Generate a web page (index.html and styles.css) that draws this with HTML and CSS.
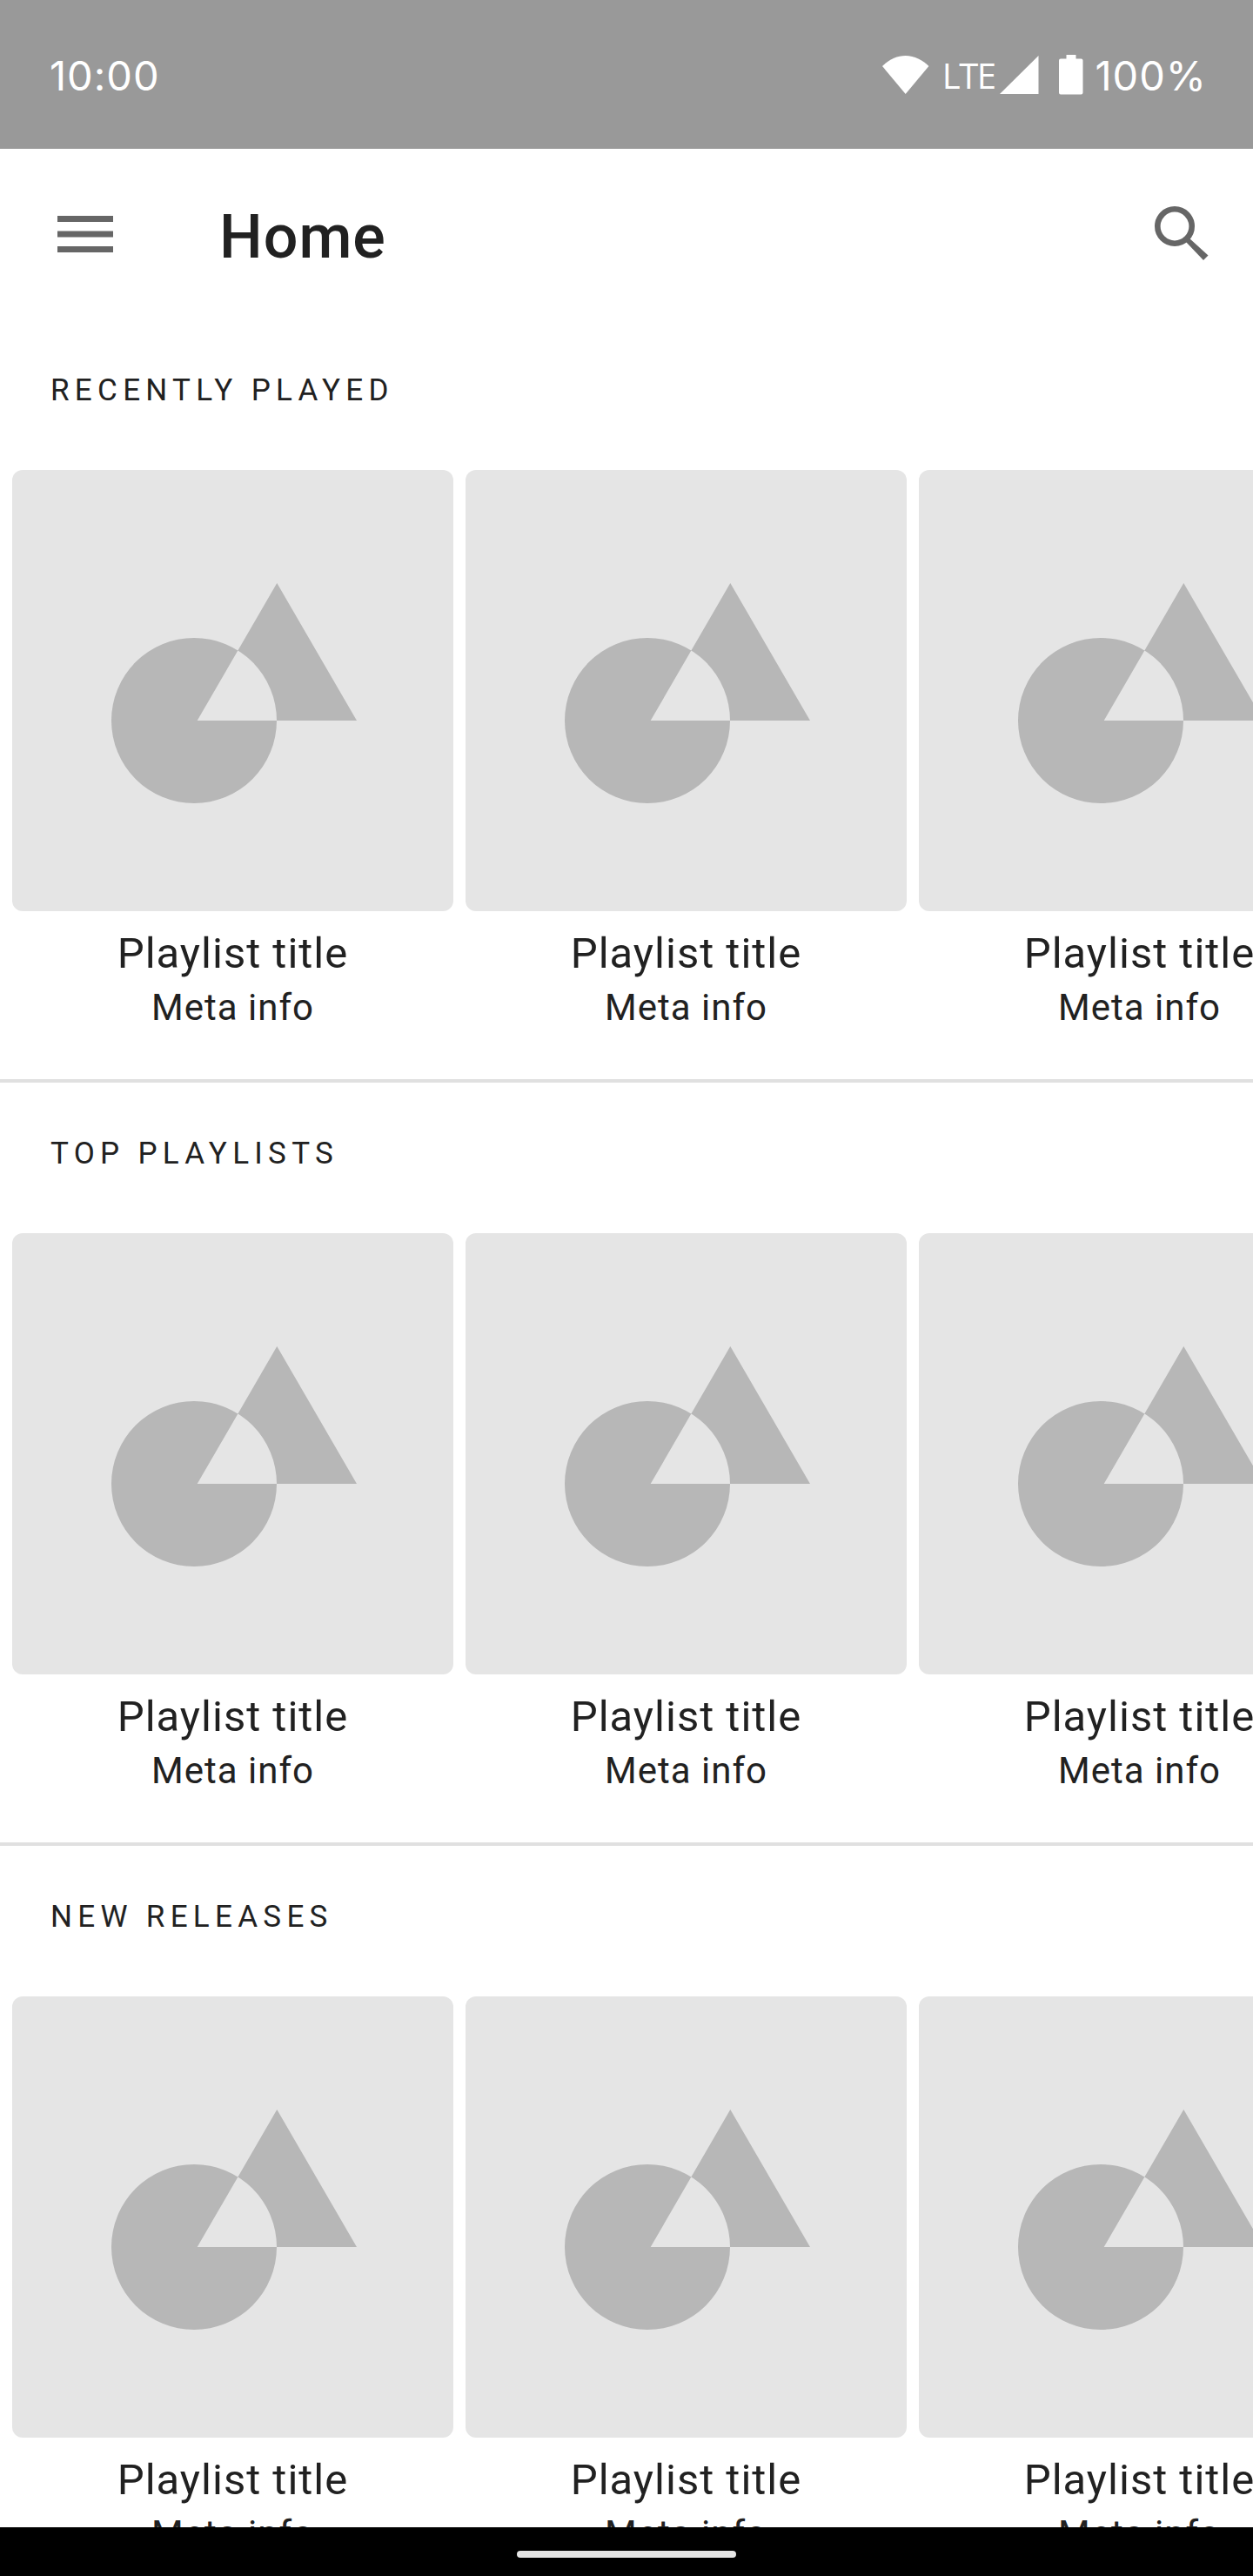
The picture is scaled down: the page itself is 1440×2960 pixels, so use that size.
FILE: index.html
```html
<!doctype html>
<html>
<head>
<title>Home</title>
<meta http-equiv="Content-Type" content="text/html; charset=utf-8" />
<link rel="stylesheet" href="styles.css">
</head>

<body>

<svg class="defs" width="0" height="0">
	<symbol id="art" viewBox="0 0 507 507">
		<!-- Circle and triangle in one path: the overlap drops out with evenodd. -->
		<path fill-rule="evenodd" d="M114 288a95 95 0 1 0 190 0a95 95 0 1 0 -190 0z M212.7 288L304.3 130L396 288z"/>
	</symbol>
</svg>

<div class="phone">

<div class="status-bar">
	<span class="time">10:00</span>
	<div class="status-icons">
		<svg class="wifi" width="54" height="44" viewBox="0 0 54 44"><path d="M0 12C7 5 16.500 0 26.700 0S46.500 5 53.400 12L26.700 44z"/></svg>
		<span class="lte">LTE</span>
		<svg class="signal" width="45" height="44" viewBox="0 0 45 44"><path d="M0 44L44.500 0V44z"/></svg>
		<svg class="battery" width="28" height="46" viewBox="0 0 28 46"><path d="M8.500 0H19.500V4.500H25.500A2 2 0 0 1 27.500 6.500V43.500A2 2 0 0 1 25.500 45.500H2A2 2 0 0 1 0 43.500V6.500A2 2 0 0 1 2 4.500H8.500z"/></svg>
		<span class="battery-level">100%</span>
	</div>
</div>

<header class="app-bar">
	<svg class="menu-icon" width="64" height="42" viewBox="0 0 64 42"><path d="M0 0H64V7H0zM0 17.500H64V24.500H0zM0 35H64V42H0z"/></svg>
	<h1 class="app-title">Home</h1>
	<svg class="search-icon" width="62" height="62" viewBox="0 0 62 62"><circle class="lens" cx="23" cy="23" r="19.700"/><path d="M39 36L61.500 56.500L56 62L35 40z"/></svg>
</header>

<main class="content">

	<section class="section">
		<h2 class="section-label">RECENTLY PLAYED</h2>
		<div class="row">
			<div class="card">
				<div class="thumb"><svg class="art"><use href="#art"/></svg></div>
				<div class="card-title">Playlist title</div>
				<div class="card-meta">Meta info</div>
			</div>
			<div class="card">
				<div class="thumb"><svg class="art"><use href="#art"/></svg></div>
				<div class="card-title">Playlist title</div>
				<div class="card-meta">Meta info</div>
			</div>
			<div class="card">
				<div class="thumb"><svg class="art"><use href="#art"/></svg></div>
				<div class="card-title">Playlist title</div>
				<div class="card-meta">Meta info</div>
			</div>
		</div>
	</section>

	<section class="section">
		<h2 class="section-label">TOP PLAYLISTS</h2>
		<div class="row">
			<div class="card">
				<div class="thumb"><svg class="art"><use href="#art"/></svg></div>
				<div class="card-title">Playlist title</div>
				<div class="card-meta">Meta info</div>
			</div>
			<div class="card">
				<div class="thumb"><svg class="art"><use href="#art"/></svg></div>
				<div class="card-title">Playlist title</div>
				<div class="card-meta">Meta info</div>
			</div>
			<div class="card">
				<div class="thumb"><svg class="art"><use href="#art"/></svg></div>
				<div class="card-title">Playlist title</div>
				<div class="card-meta">Meta info</div>
			</div>
		</div>
	</section>

	<section class="section">
		<h2 class="section-label">NEW RELEASES</h2>
		<div class="row">
			<div class="card">
				<div class="thumb"><svg class="art"><use href="#art"/></svg></div>
				<div class="card-title">Playlist title</div>
				<div class="card-meta">Meta info</div>
			</div>
			<div class="card">
				<div class="thumb"><svg class="art"><use href="#art"/></svg></div>
				<div class="card-title">Playlist title</div>
				<div class="card-meta">Meta info</div>
			</div>
			<div class="card">
				<div class="thumb"><svg class="art"><use href="#art"/></svg></div>
				<div class="card-title">Playlist title</div>
				<div class="card-meta">Meta info</div>
			</div>
		</div>
	</section>

</main>

<div class="nav-bar">
	<div class="home-pill"></div>
</div>

</div>
</body>
</html>
```

FILE: styles.css
```css
html, body {
	margin: 0;
	overflow: hidden;
	background: #fff;
}

body {
	font-family: Roboto, "Liberation Sans", sans-serif;
	color: #212121;
}

.defs {
	position: absolute;
}

.phone {
	display: flex;
	flex-direction: column;
	width: 1440px;
	height: 2960px;
	overflow: hidden;
}

/* Status bar */

.status-bar {
	flex: none;
	display: flex;
	align-items: center;
	justify-content: space-between;
	height: 171px;
	padding: 2px 53px 0 57px;
	background-color: #999999;
	color: #fff;
	fill: #fff;
	font-family: Inter, sans-serif;
	font-size: 47px;
	letter-spacing: 1px;
	box-sizing: border-box;
}

.status-icons {
	display: flex;
	align-items: center;
}

.wifi,
.signal,
.battery {
	margin-top: -2px;
}

.lte {
	margin: 0 6px 0 15px;
	font-family: "Open Sans", sans-serif;
	font-size: 40px;
	letter-spacing: -1.500px;
}

.battery {
	margin-left: 23px;
}

.battery-level {
	margin-left: 13px;
}

/* App bar */

.app-bar {
	flex: none;
	display: flex;
	align-items: center;
	height: 196px;
	padding: 6px 51px 0 66px;
	fill: #666666;
	box-sizing: border-box;
}

.menu-icon {
	flex: none;
	margin-bottom: 7px;
}

.app-title {
	flex: 1;
	margin: 0 0 0 122px;
	font-size: 70px;
	font-weight: 500;
	line-height: 80px;
	letter-spacing: 1px;
}

.search-icon {
	flex: none;
	margin-bottom: 8px;
}

.lens {
	fill: none;
	stroke: #666666;
	stroke-width: 6.600;
}

/* Sections */

.content {
	flex: 1;
	min-height: 0;
	overflow: hidden;
}

.section {
	height: 877px;
	border-bottom: 4px solid #e0e0e0;
	box-sizing: border-box;
}

.section-label {
	margin: 0;
	padding: 61px 0 0 58px;
	height: 112px;
	font-size: 35px;
	font-weight: 400;
	line-height: 41px;
	letter-spacing: 6.300px;
}

.row {
	display: flex;
	gap: 14px;
	padding: 0 14px;
}

.card {
	flex: none;
	width: 507px;
	text-align: center;
}

.thumb {
	height: 507px;
	border-radius: 12px;
	background-color: #e5e5e5;
	fill: #b7b7b7;
}

.art {
	display: block;
	width: 507px;
	height: 507px;
}

.card-title {
	margin-top: 17px;
	font-size: 49px;
	line-height: 64px;
	letter-spacing: 1px;
}

.card-meta {
	font-size: 42px;
	line-height: 60px;
	letter-spacing: 1px;
}

/* Nav bar */

.nav-bar {
	flex: none;
	display: flex;
	justify-content: center;
	height: 56px;
	padding-top: 27px;
	background-color: #000;
	box-sizing: border-box;
}

.home-pill {
	width: 252px;
	height: 8px;
	border-radius: 4px;
	background-color: #e5e5e5;
}
```
